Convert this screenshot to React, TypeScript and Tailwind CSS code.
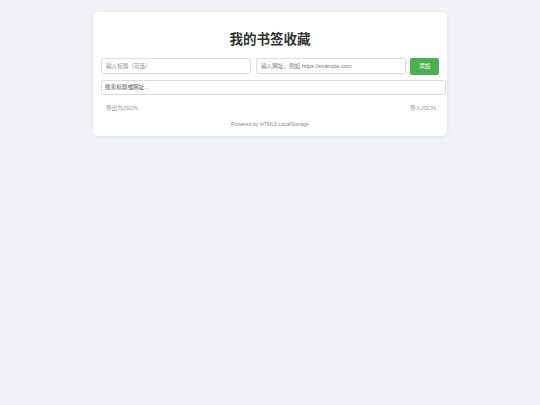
import { useState } from 'react';

const font = { fontFamily: '"Liberation Sans", "Noto Sans CJK SC", sans-serif' };

export default function App() {
  const [title, setTitle] = useState('');
  const [url, setUrl] = useState('');
  const [query, setQuery] = useState('');

  return (
    <div className="min-h-[405px] w-full bg-[#f0f2f5] pt-[12px]" style={font}>
      <div className="mx-auto w-[354px] rounded-[5px] bg-white px-[8px] pb-[8px] pt-[20px] shadow-[0_1px_4px_rgba(0,0,0,0.08)]">
        <h1 className="mb-[10px] text-center text-[13.5px] font-bold leading-[16px] text-[#333]">我的书签收藏</h1>

        <div className="flex items-start">
          <input
            value={title}
            onChange={(e) => setTitle(e.target.value)}
            placeholder="输入标题（可选）"
            className="h-[16px] w-[150px] rounded-[2px] border border-[#dcdcdc] px-[4px] text-[5.6px] text-[#333] outline-none placeholder:text-[#8c8c8c]"
          />
          <input
            value={url}
            onChange={(e) => setUrl(e.target.value)}
            placeholder="输入网址，例如 https://example.com"
            className="ml-[5px] h-[16px] w-[150px] rounded-[2px] border border-[#dcdcdc] px-[4px] text-[5.6px] text-[#333] outline-none placeholder:text-[#7a7a7a]"
          />
          <button className="ml-[4px] h-[17px] w-[29px] rounded-[2px] bg-[#4caf50] text-[5.6px] text-white">添加</button>
        </div>

        <input
          value={query}
          onChange={(e) => setQuery(e.target.value)}
          placeholder="搜索标题或网址..."
          className="mt-[5px] block h-[14.5px] w-[345px] rounded-[2px] border border-[#dcdcdc] px-[3px] text-[5.6px] text-[#333] outline-none placeholder:text-[#555]"
        />

        <div className="mt-[9px] flex items-center justify-between pl-[5px] pr-[3px] text-[5.6px] leading-[8px] text-[#999]">
          <span>导出为JSON</span>
          <span>导入JSON</span>
        </div>

        <p className="mt-[8px] text-center text-[5.2px] leading-[8px] text-[#888]">Powered by HTML5 LocalStorage</p>
      </div>
    </div>
  );
}
